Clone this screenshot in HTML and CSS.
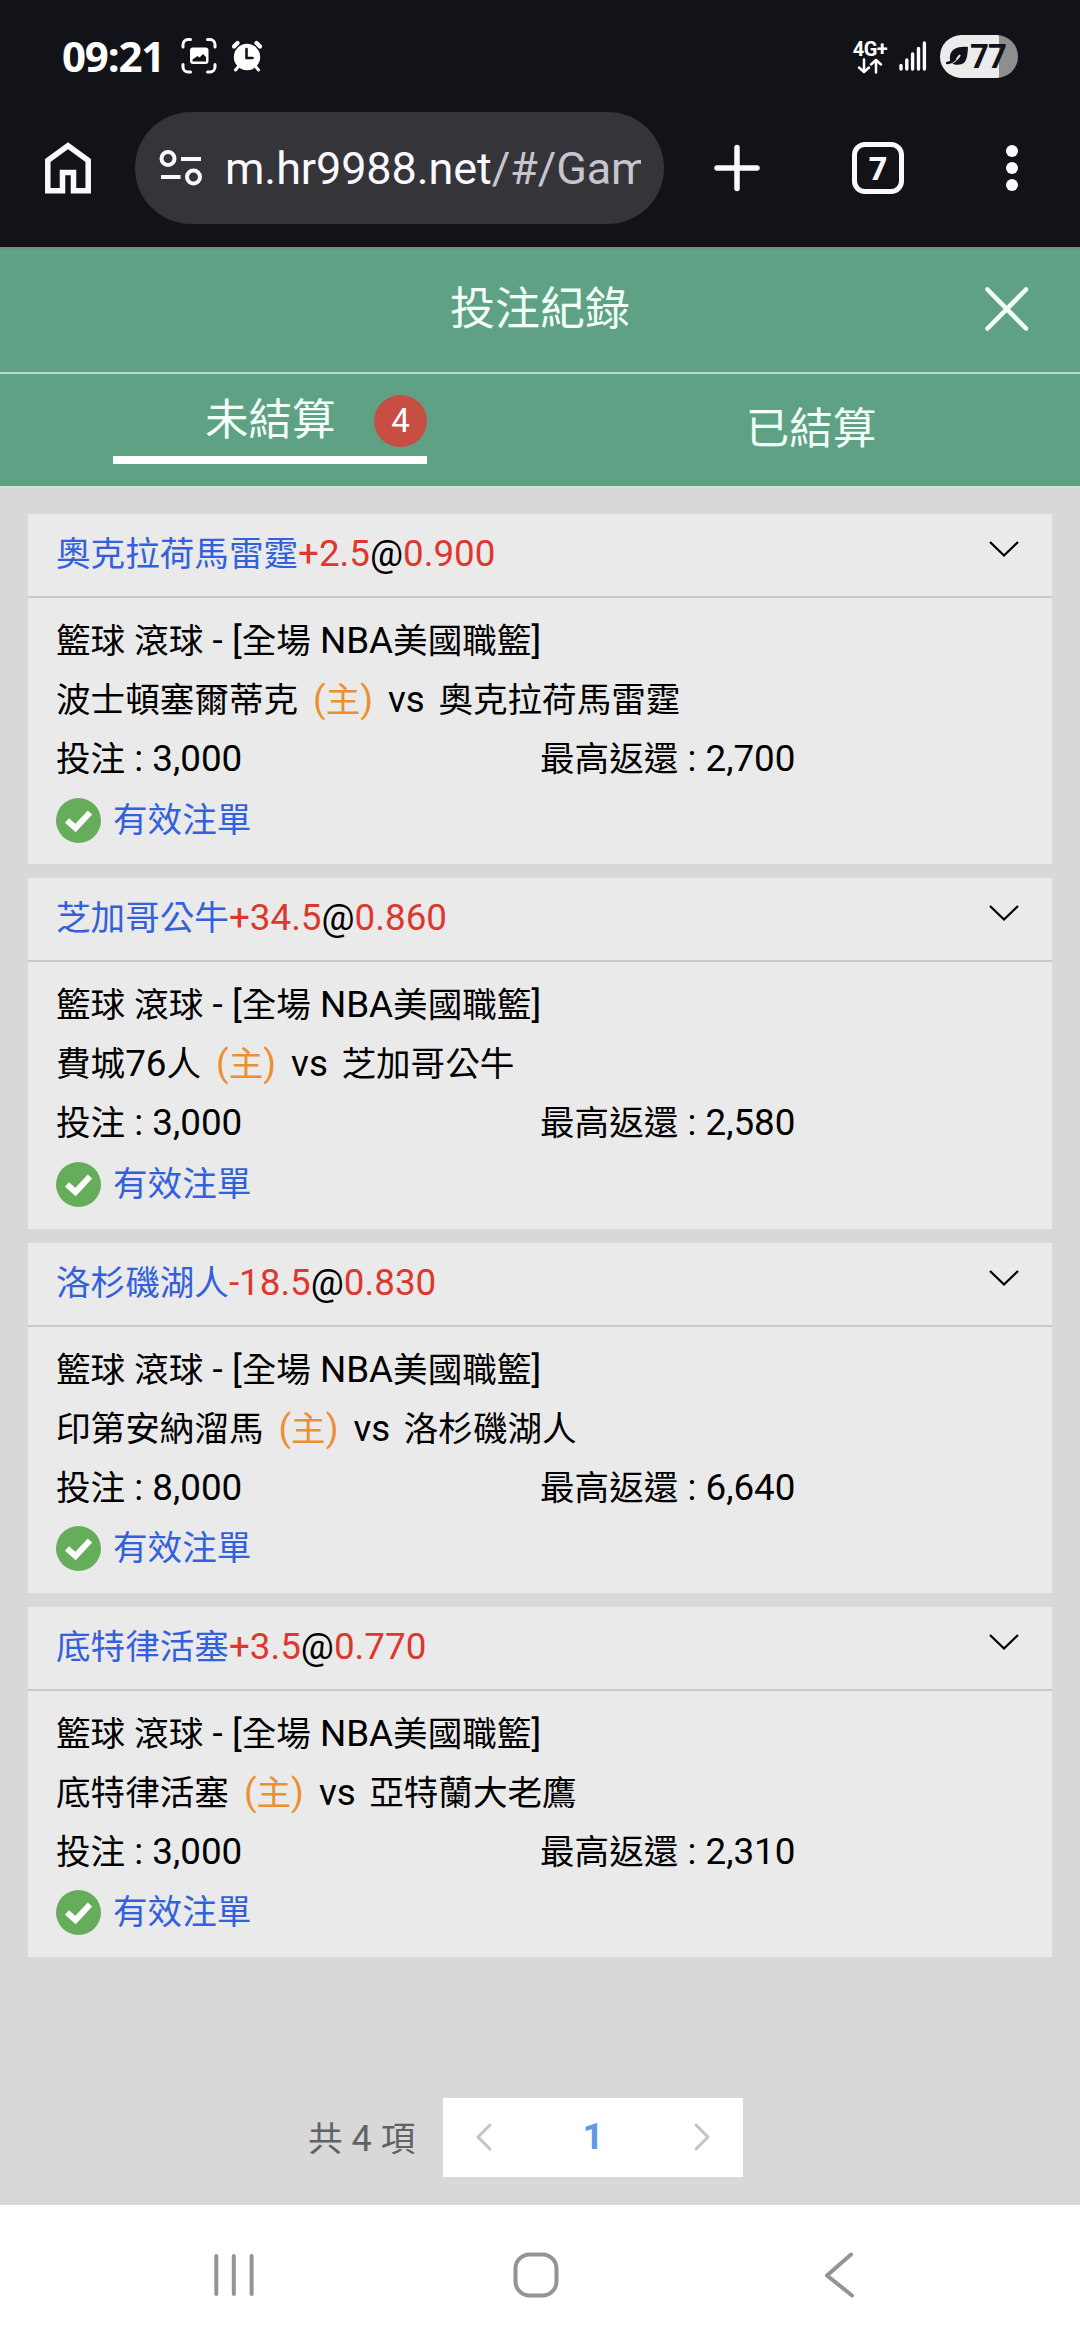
FILE: index.html
```html
<!DOCTYPE html>
<html lang="zh-Hant">
<head>
<meta charset="utf-8">
<title>投注紀錄</title>
<link rel="stylesheet" href="styles.css">
</head>
<body>
<div class="screen">
  <header class="chrome">
    <div class="status">
      <span class="clock">09:21</span>
      <svg class="capture-icon" width="36" height="36" viewBox="0 0 36 36"><path d="M2 9V6.500a5 5 0 0 1 5-5H9.500M26.500 1.500H29a5 5 0 0 1 5 5V9M34 26.500V29a5 5 0 0 1-5 5H26.500M9.500 34H7a5 5 0 0 1-5-5V26.500" fill="none" stroke="#fff" stroke-width="3" stroke-linecap="round"/><path fill="#fff" fill-rule="evenodd" d="M12 9.500H24.500a3 3 0 0 1 3 3V23a3 3 0 0 1-3 3H12a3 3 0 0 1-3-3V12.500a3 3 0 0 1 3-3ZM11.500 23.500H25V19L22 16L18.500 19.500L16.500 18L11.500 21.500Z"/></svg>
      <svg class="alarm-icon" width="30" height="32" viewBox="0 0 30 32"><circle cx="15" cy="17" r="13.200" fill="#fff"/><path d="M2 6.500L5.500 3M28 6.500L24.500 3" stroke="#fff" stroke-width="4.200" stroke-linecap="round"/><path d="M6 27L3.500 30M24 27L26.500 30" stroke="#fff" stroke-width="3" stroke-linecap="round"/><path d="M14.500 9V18H20.500" fill="none" stroke="#121318" stroke-width="2.600" stroke-linecap="round"/></svg>
      <span class="spacer"></span>
      <span class="network"><span class="network-label">4G+</span><svg width="26" height="16" viewBox="0 0 26 16"><path d="M7 1.500V14M2 9.500L7 14L12 9.500M19 14.500V2M14 6.500L19 2L24 6.500" fill="none" stroke="#fff" stroke-width="2.500" stroke-linecap="round" stroke-linejoin="round"/></svg></span>
      <svg class="signal-icon" width="28" height="30" viewBox="0 0 28 30"><path d="M2 24.500V28M7.800 19V28M13.600 13V28M19.500 7.500V28M25.400 2V28" stroke="#fff" stroke-width="3.400" stroke-linecap="round"/></svg>
      <span class="battery"><svg width="24" height="20" viewBox="0 0 24 20"><path d="M22 1C12 0 5 3 4 10C3.500 13 4 15 5 16C7 19 12 19.500 16 18C21 16 21.500 9 22 1Z" fill="#121318"/><path d="M-1 19C7 18 11 14 14 9" fill="none" stroke="#ececec" stroke-width="2"/><path d="M1 17C5 17 7 15 9 13" fill="none" stroke="#121318" stroke-width="2.500" stroke-linecap="round"/></svg><span>77</span></span>
    </div>
    <div class="toolbar">
      <svg class="home-icon" width="46" height="52" viewBox="0 0 46 52"><path d="M2.800 48.700V18.500L23 3.700L43.200 18.500V48.700H28.500V30.500H17.500V48.700Z" fill="none" stroke="#fbf9ff" stroke-width="5.500"/></svg>
      <div class="address">
        <svg width="44" height="38" viewBox="0 0 44 38"><g fill="none" stroke="#fbf9ff" stroke-width="4"><circle cx="9" cy="9.500" r="6.500"/><circle cx="34.500" cy="28" r="6.500"/><path d="M22 10H42M2 28H21.500"/></g></svg>
        <div class="url">m.hr9988.net<span>/#/Gam</span></div>
      </div>
      <svg class="plus-icon" width="46" height="48" viewBox="0 0 46 48"><path d="M23 3.500V44.500M3 24H43" stroke="#fbf9ff" stroke-width="5.500" stroke-linecap="round"/></svg>
      <span class="tab-count">7</span>
      <svg class="menu-icon" width="14" height="48" viewBox="0 0 14 48" fill="#fbf9ff"><circle cx="7" cy="7" r="6"/><circle cx="7" cy="24" r="6"/><circle cx="7" cy="41" r="6"/></svg>
    </div>
  </header>

  <div class="titlebar">
    <h1>投注紀錄</h1>
    <svg class="close" width="46" height="46" viewBox="0 0 46 46"><path d="M3.500 3.500L42 42.500M42 3.500L3.500 42.500" stroke="#f2fff8" stroke-width="4.600" stroke-linecap="round"/></svg>
  </div>
  <nav class="tabs">
    <div class="tab"><div class="tab-active"><span>未結算</span><b class="badge">4</b></div></div>
    <div class="tab">已結算</div>
  </nav>

  <main class="records">
    <article class="bet">
      <h2>奧克拉荷馬雷霆<i class="red">+2.5</i><i>@</i><i class="red">0.900</i><svg class="chevron" width="32" height="18" viewBox="0 0 32 18"><path d="M2 2L16 15.500L30 2"/></svg></h2>
      <div class="detail">
        <p>籃球<i> </i>滾球<i> - [</i>全場<i> NBA</i>美國職籃<i>]</i></p>
        <p class="match"><span>波士頓塞爾蒂克</span><span class="host"><i>(</i>主<i>)</i></span><i>vs</i><span>奧克拉荷馬雷霆</span></p>
        <p class="amounts"><span>投注<i> : 3,000</i></span><span>最高返還<i> : 2,700</i></span></p>
        <p class="valid"><svg width="45" height="45" viewBox="0 0 45 45"><circle cx="22.500" cy="22.500" r="22.500"/><path d="M11 22.500L19.500 30L34 14.500"/></svg>有效注單</p>
      </div>
    </article>
    <article class="bet">
      <h2>芝加哥公牛<i class="red">+34.5</i><i>@</i><i class="red">0.860</i><svg class="chevron" width="32" height="18" viewBox="0 0 32 18"><path d="M2 2L16 15.500L30 2"/></svg></h2>
      <div class="detail">
        <p>籃球<i> </i>滾球<i> - [</i>全場<i> NBA</i>美國職籃<i>]</i></p>
        <p class="match"><span>費城<i>76</i>人</span><span class="host"><i>(</i>主<i>)</i></span><i>vs</i><span>芝加哥公牛</span></p>
        <p class="amounts"><span>投注<i> : 3,000</i></span><span>最高返還<i> : 2,580</i></span></p>
        <p class="valid"><svg width="45" height="45" viewBox="0 0 45 45"><circle cx="22.500" cy="22.500" r="22.500"/><path d="M11 22.500L19.500 30L34 14.500"/></svg>有效注單</p>
      </div>
    </article>
    <article class="bet">
      <h2>洛杉磯湖人<i class="red">-18.5</i><i>@</i><i class="red">0.830</i><svg class="chevron" width="32" height="18" viewBox="0 0 32 18"><path d="M2 2L16 15.500L30 2"/></svg></h2>
      <div class="detail">
        <p>籃球<i> </i>滾球<i> - [</i>全場<i> NBA</i>美國職籃<i>]</i></p>
        <p class="match"><span>印第安納溜馬</span><span class="host"><i>(</i>主<i>)</i></span><i>vs</i><span>洛杉磯湖人</span></p>
        <p class="amounts"><span>投注<i> : 8,000</i></span><span>最高返還<i> : 6,640</i></span></p>
        <p class="valid"><svg width="45" height="45" viewBox="0 0 45 45"><circle cx="22.500" cy="22.500" r="22.500"/><path d="M11 22.500L19.500 30L34 14.500"/></svg>有效注單</p>
      </div>
    </article>
    <article class="bet">
      <h2>底特律活塞<i class="red">+3.5</i><i>@</i><i class="red">0.770</i><svg class="chevron" width="32" height="18" viewBox="0 0 32 18"><path d="M2 2L16 15.500L30 2"/></svg></h2>
      <div class="detail">
        <p>籃球<i> </i>滾球<i> - [</i>全場<i> NBA</i>美國職籃<i>]</i></p>
        <p class="match"><span>底特律活塞</span><span class="host"><i>(</i>主<i>)</i></span><i>vs</i><span>亞特蘭大老鷹</span></p>
        <p class="amounts"><span>投注<i> : 3,000</i></span><span>最高返還<i> : 2,310</i></span></p>
        <p class="valid"><svg width="45" height="45" viewBox="0 0 45 45"><circle cx="22.500" cy="22.500" r="22.500"/><path d="M11 22.500L19.500 30L34 14.500"/></svg>有效注單</p>
      </div>
    </article>
    <footer class="pager">
      <span class="total">共<i> 4 </i>項</span>
      <div class="pages">
        <svg width="18" height="30" viewBox="0 0 18 30"><path d="M15 3L3 15L15 27"/></svg>
        <b>1</b>
        <svg width="18" height="30" viewBox="0 0 18 30"><path d="M3 3L15 15L3 27"/></svg>
      </div>
    </footer>
  </main>

  <div class="system-nav">
    <svg width="42" height="50" viewBox="0 0 42 50"><path d="M3.300 6V44M20.800 6V44M38.600 6V44"/></svg>
    <svg class="nav-home" width="50" height="50" viewBox="0 0 50 50"><rect x="4.500" y="4.500" width="41" height="41" rx="14"/></svg>
    <svg class="nav-back" width="32" height="50" viewBox="0 0 32 50"><path d="M28 4.500L4 25.500L29 45.500"/></svg>
  </div>
</div>
</body>
</html>
```
FILE: styles.css
```css
* { box-sizing: border-box; }
body { margin: 0; font-family: Roboto, "Noto Sans CJK TC", sans-serif; }
h1, h2, p { margin: 0; font-weight: 400; }
i { font-style: normal; }
svg { display: block; flex: none; }

.screen { width: 1080px; height: 2340px; display: flex; flex-direction: column; overflow: hidden; background: #d8d8d8; }

/* Browser chrome */
.chrome { height: 247px; flex: none; background: #121318; color: #fff; }
.status { height: 112px; display: flex; align-items: center; padding: 0 62px; }
.clock { font: 700 42px/48px "Open Sans", sans-serif; letter-spacing: -1.200px; width: 119px; white-space: nowrap; }
.alarm-icon { margin-left: 15px; }
.spacer { flex: 1; }
.network { display: flex; flex-direction: column; align-items: center; width: 36px; margin-right: 11px; padding-top: 1px; }
.network-label { font: 700 20px/18px Roboto, sans-serif; letter-spacing: -0.5px; }
.signal-icon { margin-right: 13px; }
.battery { display: flex; align-items: center; width: 78px; height: 43px; padding-left: 6px; border-radius: 22px; background: linear-gradient(90deg, #ececec 59px, #8e8e8f 59px); color: #121318; font: 700 33px/43px Roboto, sans-serif; letter-spacing: -1px; }
.toolbar { height: 112px; display: flex; align-items: center; padding-left: 45px; }
.address { width: 529px; height: 112px; margin-left: 44px; display: flex; align-items: center; padding-left: 24px; border-radius: 56px; background: #343439; }
.url { width: 416px; margin-left: 22px; padding-top: 2px; overflow: hidden; white-space: nowrap; font: 400 45px/60px Roboto, sans-serif; letter-spacing: -0.100px; color: #fbf9ff; }
.url span { color: #c7c5cf; }
.plus-icon { margin-left: 50px; }
.tab-count { width: 52px; height: 52px; margin-left: 92px; border: 5px solid #fbf9ff; border-radius: 13px; text-align: center; font: 700 32px/42px "Open Sans", sans-serif; color: #fbf9ff; }
.menu-icon { margin-left: 101px; }

/* Page header */
.titlebar { height: 127px; flex: none; display: flex; align-items: center; justify-content: space-between; padding: 0 50px 4px 450px; background: #5fa185; border-top: 2px solid #788c85; border-bottom: 2px solid #bdd7cb; color: #f2fff8; }
.titlebar h1 { padding-top: 3px; font-size: 45px; line-height: 60px; }
.tabs { height: 114px; flex: none; display: flex; background: #5fa185; border-bottom: 2px solid #cde4d9; color: #f2fff8; font-size: 43.500px; }
.tab { width: 50%; padding: 0 0 9px 2px; display: flex; align-items: center; justify-content: center; }
.tab:first-child { padding: 0; align-items: flex-start; }
.tab-active { width: 314px; height: 90px; display: flex; align-items: center; justify-content: space-between; padding: 0 0 0 92px; border-bottom: 8px solid #fff; }
.tab-active span { margin-top: 2px; }
.badge { width: 53px; height: 52px; margin-top: 11px; border-radius: 50%; background: #c84d43; color: #fff; text-align: center; font-size: 33px; line-height: 52px; font-weight: 400; }

/* Bet records */
.records { flex: 1; padding: 26px 28px 0; }
.bet { height: 350.300px; margin-bottom: 14px; background: #eaeaea; color: #000; font-size: 34.600px; line-height: 59px; }
.bet i { font-size: 36.800px; line-height: 1; white-space: pre; }
.bet h2 { height: 84px; display: flex; align-items: baseline; padding: 10px 32px 0 28px; border-bottom: 2px solid #c9c9c9; font-size: inherit; line-height: 60px; color: #3261db; }
.bet h2 i { color: #000; }
.bet h2 .red { color: #dd382d; }
.chevron { margin-left: auto; align-self: flex-start; margin-top: 16px; fill: none; stroke: #000; stroke-width: 2.300; }
.detail { padding: 14px 28px 0; }
.detail p { height: 59px; }
.match { display: flex; align-items: baseline; gap: 15px; }
.match span:last-child { margin-left: -1.500px; }
.match .host { color: #eb8f32; }
.amounts { display: flex; }
.amounts span { width: 484.500px; }
.detail .valid { display: flex; align-items: center; gap: 12px; height: 62px; color: #3261db; }
.valid circle { fill: #66ad5b; }
.valid path { fill: none; stroke: #fff; stroke-width: 6; }

/* Pagination */
.pager { display: flex; align-items: center; justify-content: flex-start; padding-left: 280px; margin-top: 141px; height: 79px; }
.total { width: 135px; padding-bottom: 3px; color: #606266; font-size: 34.600px; white-space: nowrap; }
.total i { font-size: 36px; white-space: pre; }
.pages { width: 300px; height: 79px; display: flex; align-items: center; justify-content: space-between; padding: 0 32px 2px; background: #fff; }
.pages b { color: #6098ea; font-size: 37px; }
.pages path { fill: none; stroke: #c0c4cc; stroke-width: 3; stroke-linecap: round; stroke-linejoin: round; }

/* Android navigation */
.system-nav { height: 135px; flex: none; display: flex; align-items: center; padding: 4px 0 0 213px; background: #fff; }
.system-nav svg { fill: none; stroke: #949494; stroke-width: 4; stroke-linecap: round; stroke-linejoin: round; }
.nav-home { margin-left: 256px; }
.nav-back { margin-left: 262px; }
```
